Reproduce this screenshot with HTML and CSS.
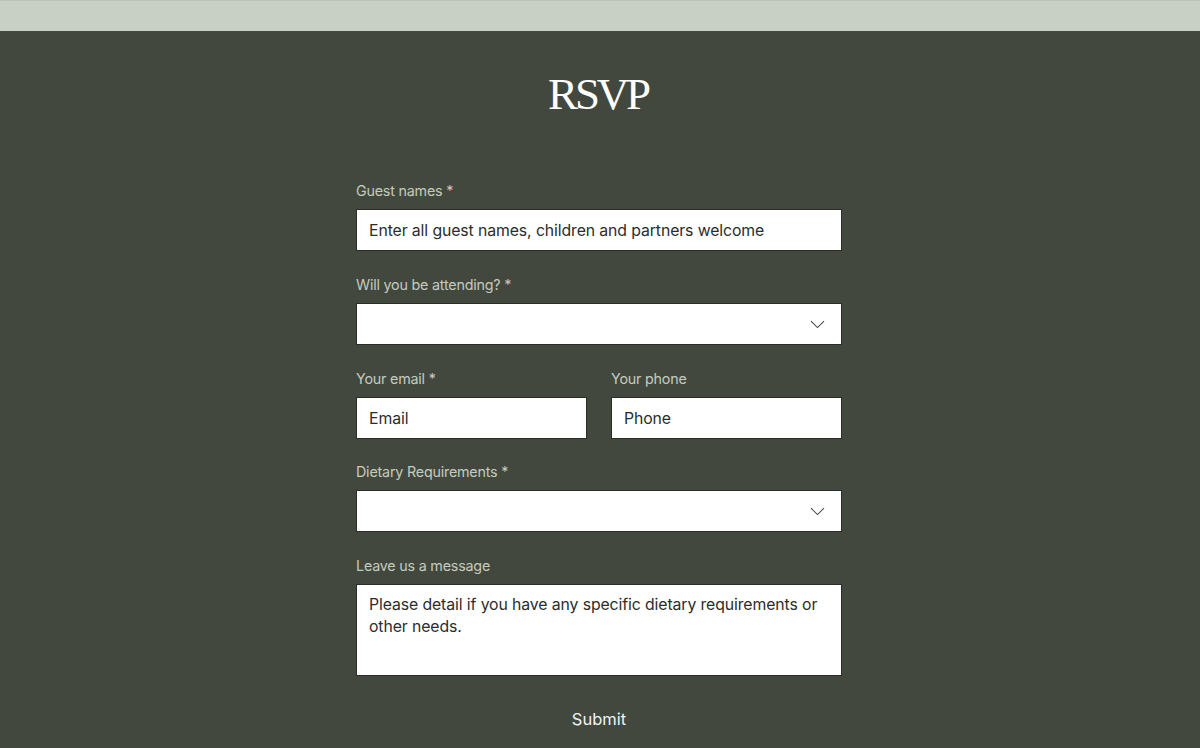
FILE: index.html
```html
<!DOCTYPE html>
<html lang="en">
<head>
<meta charset="utf-8">
<title>RSVP</title>
<link rel="stylesheet" href="styles.css">
</head>
<body>
<div class="topband"></div>
<main class="section">
  <h1 class="title">RSVP</h1>
  <form class="form">
    <div class="field">
      <label class="label">Guest names *</label>
      <div class="box"><span class="ph">Enter all guest names, children and partners welcome</span></div>
    </div>
    <div class="field">
      <label class="label">Will you be attending? *</label>
      <div class="box select">
        <svg class="chev" width="15" height="9" viewBox="0 0 15 9"><path d="M1 1.2 L7.5 7.6 L14 1.2" fill="none" stroke="#4a4a4a" stroke-width="1.1"/></svg>
      </div>
    </div>
    <div class="row">
      <div class="field">
        <label class="label">Your email *</label>
        <div class="box"><span class="ph">Email</span></div>
      </div>
      <div class="field">
        <label class="label">Your phone</label>
        <div class="box"><span class="ph">Phone</span></div>
      </div>
    </div>
    <div class="field">
      <label class="label">Dietary Requirements *</label>
      <div class="box select">
        <svg class="chev" width="15" height="9" viewBox="0 0 15 9"><path d="M1 1.2 L7.5 7.6 L14 1.2" fill="none" stroke="#4a4a4a" stroke-width="1.1"/></svg>
      </div>
    </div>
    <div class="field last">
      <label class="label">Leave us a message</label>
      <div class="box area"><span class="ph">Please detail if you have any specific dietary requirements or other needs.</span></div>
    </div>
    <div class="submit">Submit</div>
  </form>
</main>
</body>
</html>
```
FILE: styles.css
```css
html, body {
  margin: 0;
  padding: 0;
}
body {
  width: 1200px;
  height: 748px;
  overflow: hidden;
  background: #42483e;
  font-family: Inter, "Noto Sans", sans-serif;
}
.topband {
  height: 31px;
  background: #c8d0c5;
  border-top: 1px solid #bcc4b9;
  box-sizing: border-box;
}
.section {
  display: flex;
  flex-direction: column;
  align-items: center;
}
.title {
  margin: 36px 4px 0 0;
  height: 54px;
  font-family: "Liberation Serif", "DejaVu Serif", serif;
  font-weight: 400;
  font-size: 45px;
  line-height: 54px;
  letter-spacing: -3.2px;
  color: #ffffff;
}
.form {
  width: 486px;
  margin-top: 61px;
  margin-right: 2px;
  display: flex;
  flex-direction: column;
}
.field {
  display: flex;
  flex-direction: column;
  margin-bottom: 25px;
}
.field.last {
  margin-bottom: 0;
}
.row {
  display: grid;
  grid-template-columns: 231px 231px;
  column-gap: 24px;
}
.row .field {
  margin-bottom: 24px;
}
.label {
  height: 18px;
  line-height: 18px;
  font-size: 14.3px;
  color: #c4cbbf;
  margin-bottom: 9px;
  letter-spacing: -0.2px;
}
.box {
  height: 42px;
  box-sizing: border-box;
  background: #ffffff;
  border: 1px solid #2a2d28;
  padding: 0 12px;
  display: flex;
  align-items: center;
}
.select {
  justify-content: flex-end;
  padding-right: 16px;
}
.ph {
  font-size: 15.8px;
  color: #2c2c2c;
  letter-spacing: -0.1px;
}
.area {
  height: 92px;
  align-items: flex-start;
  padding-top: 9px;
}
.area .ph {
  line-height: 22px;
}
.submit {
  margin-top: 33px;
  text-align: center;
  font-size: 16.5px;
  color: #f2f2f0;
  line-height: 20px;
}
```
